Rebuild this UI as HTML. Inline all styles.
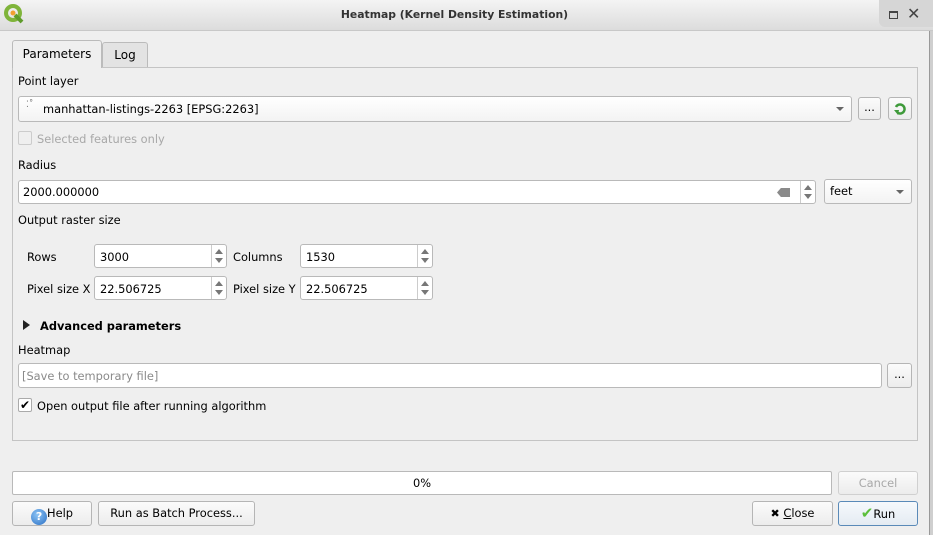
<!DOCTYPE html>
<html><head><meta charset="utf-8"><style>
*{box-sizing:border-box}
body{margin:0;width:933px;height:535px;background:#efefef;font-family:"DejaVu Sans","Liberation Sans",sans-serif;font-size:11.4px;color:#000;position:relative;overflow:hidden}
.a{position:absolute}
.title{left:0;top:0;width:933px;height:31px;background:linear-gradient(#f4f4f4,#dcdcdc);border-bottom:1px solid #c8c8c8}
.title .t{left:0;width:909px;top:8px;text-align:center;font-weight:bold;font-size:10.8px;color:#333}
.inp{background:#fff;border:1px solid #b9b9b9;border-radius:3px}
.btn{background:linear-gradient(#fbfbfb,#ececec);border:1px solid #b5b5b5;border-radius:3px;text-align:center;line-height:23px}
.lbl{white-space:nowrap}
.spin{position:absolute;right:0;top:0;bottom:0;width:15px;border-left:1px solid #ccc}
.spin:before{content:"";position:absolute;left:3px;top:4px;border:4px solid transparent;border-bottom:5px solid #777;border-top:0}
.spin:after{content:"";position:absolute;left:3px;bottom:4px;border:4px solid transparent;border-top:5px solid #777;border-bottom:0}
.dd:after{content:"";position:absolute;right:7px;top:10px;border:4px solid transparent;border-top:4px solid #666}
.cb{width:14px;height:14px;border:1px solid #aaa;background:#fff;border-radius:2px}
</style></head><body>
<div class="a title"><div class="a t">Heatmap (Kernel Density Estimation)</div>
<svg class="a" style="left:3px;top:3px" width="22" height="22" viewBox="0 0 22 22"><circle cx="10" cy="10" r="7" fill="none" stroke="#7fb43a" stroke-width="4"/><path d="M12 12l7 7" stroke="#5e9b2b" stroke-width="4"/><circle cx="10" cy="10" r="2.5" fill="#f0a030"/></svg>
<div class="a" style="left:879px;top:0;width:54px;height:27px;background:#d6d6d6;border-bottom-left-radius:6px"></div>
<div class="a" style="left:889px;top:11px;width:9px;height:8px;border:1px solid #444;border-top-width:2px"></div>
<div class="a" style="left:907px;top:4px;font-size:16px;color:#444">✕</div>
</div>
<div class="a" style="left:929px;top:31px;width:4px;height:504px;background:#cfcfcf;border-left:1px solid #999"></div>
<div class="a" style="left:102px;top:42px;width:46px;height:26px;border:1px solid #bbb;border-bottom:none;background:#e3e3e3;border-radius:3px 3px 0 0;text-align:center;line-height:25px;font-size:12px">Log</div>
<div class="a" style="left:12px;top:67px;width:906px;height:374px;border:1px solid #c4c4c4;background:#efefef"></div>
<div class="a" style="left:12px;top:40px;width:90px;height:28px;border:1px solid #bbb;border-bottom:none;background:#efefef;border-radius:3px 3px 0 0;text-align:center;line-height:27px;font-size:12px">Parameters</div>
<div class="a lbl" style="left:18px;top:74px">Point layer</div>
<div class="a inp dd" style="left:18px;top:96px;width:834px;height:26px;background:linear-gradient(#fff,#f3f3f3)"><span class="a" style="left:7px;top:3px;font-size:9px;color:#777">⁚˚</span><span class="a" style="left:24px;top:5px">manhattan-listings-2263 [EPSG:2263]</span></div>
<div class="a btn" style="left:858px;top:97px;width:23px;height:23px;line-height:18px">...</div>
<div class="a btn" style="left:888px;top:97px;width:24px;height:23px"><svg class="a" style="left:3px;top:3px" width="16" height="16" viewBox="0 0 16 16"><path d="M4 6a4.5 4.5 0 1 1 2 6" fill="none" stroke="#3e9a3a" stroke-width="2.5"/><path d="M2 9l4 5 1-5z" fill="#3e9a3a"/></svg></div>
<div class="a cb" style="left:18px;top:131px;border-color:#ccc;background:#efefef"></div>
<div class="a lbl" style="left:37px;top:132px;color:#a8a8a8">Selected features only</div>
<div class="a lbl" style="left:18px;top:158px">Radius</div>
<div class="a inp" style="left:18px;top:180px;width:798px;height:24px"><span class="a" style="left:4px;top:4px">2000.000000</span>
<div class="a" style="left:758px;top:7px;width:13px;height:9px;background:#8a8a8a;clip-path:polygon(30% 0,100% 0,100% 100%,30% 100%,0 50%)"></div><div class="spin"></div></div>
<div class="a inp dd" style="left:824px;top:179px;width:88px;height:25px;background:linear-gradient(#fff,#f3f3f3)"><span class="a" style="left:5px;top:4px">feet</span></div>
<div class="a lbl" style="left:18px;top:213px">Output raster size</div>
<div class="a lbl" style="left:27px;top:250px">Rows</div>
<div class="a inp" style="left:94px;top:244px;width:133px;height:24px"><span class="a" style="left:5px;top:5px">3000</span><div class="spin"></div></div>
<div class="a lbl" style="left:233px;top:250px">Columns</div>
<div class="a inp" style="left:300px;top:244px;width:133px;height:24px"><span class="a" style="left:5px;top:5px">1530</span><div class="spin"></div></div>
<div class="a lbl" style="left:27px;top:282px">Pixel size X</div>
<div class="a inp" style="left:94px;top:276px;width:133px;height:24px"><span class="a" style="left:5px;top:5px">22.506725</span><div class="spin"></div></div>
<div class="a lbl" style="left:233px;top:282px">Pixel size Y</div>
<div class="a inp" style="left:300px;top:276px;width:133px;height:24px"><span class="a" style="left:5px;top:5px">22.506725</span><div class="spin"></div></div>
<div class="a" style="left:23px;top:320px;border:5px solid transparent;border-left:7px solid #222;border-right:0"></div>
<div class="a lbl" style="left:40px;top:319px;font-weight:bold">Advanced parameters</div>
<div class="a lbl" style="left:18px;top:343px">Heatmap</div>
<div class="a inp" style="left:18px;top:363px;width:864px;height:25px"><span class="a" style="left:3px;top:5px;color:#8a8a8a">[Save to temporary file]</span></div>
<div class="a btn" style="left:887px;top:363px;width:25px;height:25px;line-height:20px">...</div>
<div class="a cb" style="left:18px;top:398px;font-size:12px;line-height:12px;text-align:center">✔</div>
<div class="a lbl" style="left:37px;top:399px">Open output file after running algorithm</div>
<div class="a inp" style="left:12px;top:471px;width:820px;height:24px;text-align:center;line-height:22px;border-radius:2px">0%</div>
<div class="a btn" style="left:838px;top:471px;width:80px;height:24px;color:#a8a8a8;border-color:#d0d0d0">Cancel</div>
<div class="a btn" style="left:12px;top:501px;width:80px;height:25px"><span style="display:inline-block;width:16px;height:16px;border-radius:50%;background:radial-gradient(circle at 40% 35%,#8cc4f5,#2a6fc4);color:#fff;font-size:11px;line-height:16px;vertical-align:-4px;font-weight:bold;position:relative;top:-1px">?</span>Help</div>
<div class="a btn" style="left:98px;top:501px;width:157px;height:25px">Run as Batch Process...</div>
<div class="a btn" style="left:752px;top:501px;width:81px;height:25px"><b style="font-size:11px">✖</b> <u>C</u>lose</div>
<div class="a btn" style="left:838px;top:501px;width:80px;height:25px;border-color:#5a8ab8;background:linear-gradient(#f6f9fc,#e4ebf2)"><span style="color:#5bbf3a;font-size:15px">✔</span>Run</div>
</body></html>
